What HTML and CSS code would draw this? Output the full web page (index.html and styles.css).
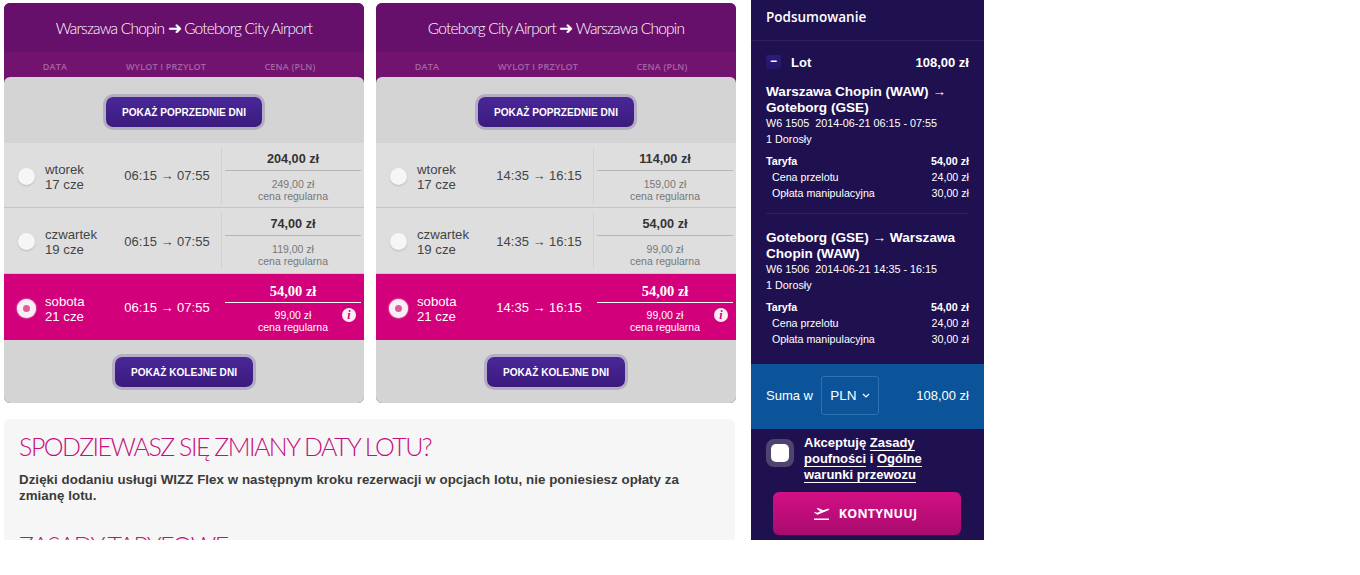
FILE: index.html
```html
<!DOCTYPE html>
<html lang="pl">
<head>
  <meta charset="UTF-8"/>
  <title>Wybór lotu</title>
  <link rel="stylesheet" href="styles.css">
</head>
<body>
  <div class="page">

    <!-- Flights -->
    <div class="main">
      <div class="flights">

        <div class="card">
          <div class="card-title">Warszawa Chopin <span class="bold-arrow">➜</span> Goteborg City Airport</div>
          <div class="card-cols"><span>DATA</span><span>WYLOT I PRZYLOT</span><span>CENA (PLN)</span></div>
          <div class="card-body">
            <div class="more more-top"><div class="more-btn">POKAŻ POPRZEDNIE DNI</div></div>
            <div class="day">
              <div class="radio"></div>
              <div class="date">wtorek<br>17 cze</div>
              <div class="time">06:15 → 07:55</div>
              <div class="price"><div class="price-now">204,00 zł</div><div class="price-old">249,00 zł<br>cena regularna</div></div>
            </div>
            <div class="day">
              <div class="radio"></div>
              <div class="date">czwartek<br>19 cze</div>
              <div class="time">06:15 → 07:55</div>
              <div class="price"><div class="price-now">74,00 zł</div><div class="price-old">119,00 zł<br>cena regularna</div></div>
            </div>
            <div class="day selected">
              <div class="radio"></div>
              <div class="date">sobota<br>21 cze</div>
              <div class="time">06:15 → 07:55</div>
              <div class="price"><div class="price-now">54,00 zł</div><div class="price-old">99,00 zł<br>cena regularna</div><span class="info">i</span></div>
            </div>
            <div class="more more-bottom"><div class="more-btn">POKAŻ KOLEJNE DNI</div></div>
          </div>
        </div>

        <div class="card">
          <div class="card-title">Goteborg City Airport <span class="bold-arrow">➜</span> Warszawa Chopin</div>
          <div class="card-cols"><span>DATA</span><span>WYLOT I PRZYLOT</span><span>CENA (PLN)</span></div>
          <div class="card-body">
            <div class="more more-top"><div class="more-btn">POKAŻ POPRZEDNIE DNI</div></div>
            <div class="day">
              <div class="radio"></div>
              <div class="date">wtorek<br>17 cze</div>
              <div class="time">14:35 → 16:15</div>
              <div class="price"><div class="price-now">114,00 zł</div><div class="price-old">159,00 zł<br>cena regularna</div></div>
            </div>
            <div class="day">
              <div class="radio"></div>
              <div class="date">czwartek<br>19 cze</div>
              <div class="time">14:35 → 16:15</div>
              <div class="price"><div class="price-now">54,00 zł</div><div class="price-old">99,00 zł<br>cena regularna</div></div>
            </div>
            <div class="day selected">
              <div class="radio"></div>
              <div class="date">sobota<br>21 cze</div>
              <div class="time">14:35 → 16:15</div>
              <div class="price"><div class="price-now">54,00 zł</div><div class="price-old">99,00 zł<br>cena regularna</div><span class="info">i</span></div>
            </div>
            <div class="more more-bottom"><div class="more-btn">POKAŻ KOLEJNE DNI</div></div>
          </div>
        </div>

      </div>

      <div class="notes">
        <h2>SPODZIEWASZ SIĘ ZMIANY DATY LOTU?</h2>
        <p>Dzięki dodaniu usługi WIZZ Flex w następnym kroku rezerwacji w opcjach lotu, nie poniesiesz opłaty za zmianę lotu.</p>
        <h2 class="notes-second">ZASADY TARYFOWE</h2>
      </div>
    </div>

    <!-- Summary -->
    <div class="summary">
      <div class="summary-title">Podsumowanie</div>
      <div class="summary-body">
        <div class="lot-row">
          <span class="toggle">−</span>
          <span class="lot-name">Lot</span>
          <span class="lot-total">108,00 zł</span>
        </div>

        <div class="leg">
          <div class="leg-route">Warszawa Chopin (WAW) → Goteborg (GSE)</div>
          <div class="leg-meta">W6 1505&nbsp; 2014-06-21 06:15 - 07:55</div>
          <div class="leg-pax">1 Dorosły</div>
          <div class="fare fare-head"><span>Taryfa</span><span>54,00 zł</span></div>
          <div class="fare"><span>Cena przelotu</span><span>24,00 zł</span></div>
          <div class="fare"><span>Opłata manipulacyjna</span><span>30,00 zł</span></div>
        </div>

        <div class="leg leg-last">
          <div class="leg-route">Goteborg (GSE) → Warszawa Chopin (WAW)</div>
          <div class="leg-meta">W6 1506&nbsp; 2014-06-21 14:35 - 16:15</div>
          <div class="leg-pax">1 Dorosły</div>
          <div class="fare fare-head"><span>Taryfa</span><span>54,00 zł</span></div>
          <div class="fare"><span>Cena przelotu</span><span>24,00 zł</span></div>
          <div class="fare"><span>Opłata manipulacyjna</span><span>30,00 zł</span></div>
        </div>
      </div>

      <div class="total">
        <span class="total-label">Suma w</span>
        <span class="currency">PLN
          <svg width="8" height="5" viewBox="0 0 8 5"><path d="M1 1l3 3 3-3" fill="none" stroke="#fff" stroke-width="1.2"/></svg>
        </span>
        <span class="total-value">108,00 zł</span>
      </div>

      <div class="accept">
        <div class="checkbox"><div class="checkbox-inner"></div></div>
        <div class="accept-text">
          <div>Akceptuję <a href="#">Zasady</a></div>
          <div><a href="#">poufności</a> i <a href="#">Ogólne</a></div>
          <div><a href="#">warunki przewozu</a></div>
        </div>
      </div>

      <div class="continue-wrap">
        <div class="continue-btn">
          <svg width="17" height="14" viewBox="0 0 17 14"><path d="M1 5.5l1.2-.6 2 .9 3-1.2L3.600 1.500l1.500-.5 5.200 2.200 3.500-1.300c1-.4 2.200-.3 2.400.2.200.5-.5 1.100-1.500 1.500L4.500 7.800z" fill="#fff"/><rect x="1" y="11.500" width="15" height="1.500" fill="#fff"/></svg>
          <span>KONTYNUUJ</span>
        </div>
      </div>
    </div>

  </div>
</body>
</html>
```

FILE: styles.css
```css
html, body {
  margin: 0;
  background: #fff;
}
body {
  font-family: "Liberation Sans", Arial, sans-serif;
  height: 575px;
  overflow: hidden;
}
.page {
  display: flex;
  align-items: flex-start;
  height: 540px;
  overflow: hidden;
  width: 984px;
}
.main {
  flex: none;
  width: 735px;
  padding-left: 4px;
  margin-right: 12px;
  height: 540px;
  overflow: hidden;
}
.flights {
  display: flex;
  gap: 12px;
  padding-top: 3px;
}
/* Flight cards */
.card {
  width: 360px;
  height: 400px;
  border-radius: 6px;
  overflow: hidden;
  display: flex;
  flex-direction: column;
  background: #72146f;
}
.card-title {
  height: 49px;
  line-height: 50px;
  background: #660f6b;
  color: #fff;
  text-align: center;
  font-family: Lato, sans-serif;
  font-weight: 300;
  font-size: 15.500px;
  letter-spacing: -0.8px;
}
.bold-arrow {
  font-family: "DejaVu Sans", sans-serif;
  font-size: 17px;
  line-height: 1;
}
.card-cols {
  height: 25px;
  display: grid;
  grid-template-columns: 102px 120px 128px;
  background: #72146f;
  color: #a564a5;
  font-family: "Open Sans", sans-serif;
  font-size: 9px;
  font-weight: 600;
  line-height: 29px;
  text-align: center;
  letter-spacing: .2px;
}
.card-body {
  flex: 1;
  background: #d4d4d4;
  border-radius: 6px 6px 0 0;
  display: flex;
  flex-direction: column;
}
.more {
  display: flex;
  justify-content: center;
  align-items: center;
}
.more-top {
  height: 62px;
  padding-top: 4px;
}
.more-bottom {
  height: 63px;
}
.more-btn {
  height: 30px;
  line-height: 31px;
  padding: 0 16px;
  border-radius: 7px;
  background: linear-gradient(#4a2799, #3a1b7c);
  box-shadow: 0 0 0 3px #b4adc4;
  color: #fff;
  font-size: 10.100px;
  font-weight: bold;
  white-space: nowrap;
}
.day {
  height: 65px;
  box-sizing: border-box;
  display: flex;
  align-items: center;
  background: #dedede;
  border-bottom: 1px solid #c4c4c4;
  color: #444;
}
.day + .day {
  height: 66px;
}
.radio {
  width: 17px;
  height: 17px;
  margin-left: 14px;
  margin-top: 2px;
  border-radius: 50%;
  background: #f6f6f6;
  box-shadow: 0 1px 2px #bbb;
  flex: none;
}
.date {
  width: 80px;
  margin-left: 10px;
  margin-top: 3px;
  font-size: 13.200px;
  line-height: 15px;
  flex: none;
}
.time {
  width: 96px;
  margin-top: 1px;
  font-size: 13px;
  text-align: center;
  flex: none;
  margin-left: -6px;
}
.price {
  width: 143px;
  margin-left: 6px;
  height: 57px;
  position: relative;
  border-left: 1px solid #d2d2d2;
  padding: 0 3px;
  text-align: center;
  flex: none;
  box-sizing: border-box;
}
.price-now {
  height: 23px;
  line-height: 24px;
  border-bottom: 1px solid #b5b5b5;
  font-size: 12.700px;
  font-weight: bold;
  color: #333;
}
.price-old {
  margin-top: 7px;
  font-size: 10.500px;
  line-height: 12px;
  color: #777;
}
.day.selected {
  background: #d2007a;
  color: #fff;
  border-bottom: 0;
}
.day.selected .radio {
  width: 7px;
  height: 7px;
  background: #d9609f;
  border: 6px solid #fbeef5;
  box-shadow: 0 0 2px #fbeef5;
  margin-left: 13px;
}
.day.selected .date {
  margin-left: 9px;
}
.day.selected .price {
  border-left-color: transparent;
  color: #fff;
}
.day.selected .price-now {
  font-family: "Liberation Serif", serif;
  font-size: 14.500px;
  color: #fff;
  border-bottom-color: #fff;
}
.day.selected .price-old {
  margin-top: 6px;
  color: #fff;
}
.info {
  position: absolute;
  right: 8px;
  top: 29px;
  width: 14px;
  height: 14px;
  border-radius: 50%;
  background: #fbeef5;
  color: #d2007a;
  font-family: "Liberation Serif", serif;
  font-style: italic;
  font-weight: bold;
  font-size: 12px;
  line-height: 14px;
  text-align: center;
}
/* Notes under the cards */
.notes {
  margin-top: 16px;
  height: 121px;
  overflow: hidden;
  background: #f6f6f6;
  border-radius: 6px 6px 0 0;
  padding: 0 15px;
  width: 701px;
}
.notes h2 {
  margin: 0;
  padding-top: 12px;
  font-family: Lato, sans-serif;
  font-weight: 300;
  font-size: 25px;
  line-height: 30px;
  letter-spacing: -1.5px;
  color: #c5107f;
}
.notes p {
  margin: 11px 0 0;
  max-width: 680px;
  font-size: 13.300px;
  font-weight: bold;
  line-height: 16px;
  letter-spacing: .06px;
  color: #3b3b3b;
}
.notes .notes-second {
  padding-top: 26px;
}
/* Summary */
.summary {
  width: 233px;
  height: 540px;
  background: #1f1150;
  color: #fff;
  flex: none;
  display: flex;
  flex-direction: column;
}
.summary-title {
  height: 41px;
  box-sizing: border-box;
  padding: 9px 15px 0;
  border-bottom: 1px solid #2e2160;
  font-family: "Open Sans", sans-serif;
  font-weight: 600;
  font-size: 13.500px;
  line-height: 17px;
}
.summary-body {
  height: 323px;
  padding: 0 15px;
  box-sizing: border-box;
}
.lot-row {
  display: flex;
  align-items: center;
  height: 40px;
  padding: 1px 0;
  font-weight: bold;
  font-size: 13px;
}
.toggle {
  width: 15px;
  height: 14px;
  line-height: 13px;
  background: linear-gradient(#2b1d78, #241566);
  border-radius: 2px;
  text-align: center;
  font-size: 12px;
}
.lot-name {
  margin-left: 10px;
  flex: 1;
}
.leg {
  padding-bottom: 12px;
  border-bottom: 1px solid #2e2160;
  margin-bottom: 16px;
}
.leg-last {
  border-bottom: 0;
  margin-bottom: 0;
}
.leg-route {
  font-size: 13.600px;
  font-weight: bold;
  line-height: 16px;
  margin-top: 1px;
}
.leg-meta {
  font-size: 10.800px;
  line-height: 14px;
}
.leg-pax {
  font-size: 10.800px;
  line-height: 14px;
  margin-top: 2px;
  margin-bottom: 7px;
}
.fare {
  display: flex;
  justify-content: space-between;
  font-size: 10.700px;
  line-height: 16px;
  padding-left: 6px;
}
.fare-head {
  font-weight: bold;
  padding-left: 0;
}
.total {
  height: 65px;
  box-sizing: border-box;
  background: #0b5499;
  display: flex;
  align-items: center;
  padding: 0 15px 2px;
  font-size: 13px;
}
.currency {
  width: 58px;
  height: 39px;
  box-sizing: border-box;
  margin-left: 8px;
  border: 1px solid #2f72b0;
  border-radius: 3px;
  display: flex;
  align-items: center;
  justify-content: center;
  gap: 5px;
  font-size: 13.500px;
}
.total-value {
  margin-left: auto;
}
.accept {
  display: flex;
  padding: 6px 15px 0;
  gap: 10px;
  height: 57px;
}
.checkbox {
  width: 28px;
  height: 28px;
  margin-top: 4px;
  border-radius: 8px;
  background: #4f4470;
  display: flex;
  align-items: center;
  justify-content: center;
  flex: none;
}
.checkbox-inner {
  width: 18px;
  height: 18px;
  border-radius: 5px;
  background: #fff;
}
.accept-text {
  font-size: 13px;
  font-weight: bold;
  line-height: 16px;
}
.accept-text a {
  color: #fff;
  text-decoration: none;
  border-bottom: 1px solid #fff;
}
.continue-wrap {
  padding: 0 23px 0 22px;
}
.continue-btn {
  height: 43px;
  box-sizing: border-box;
  padding-right: 4px;
  border-radius: 6px;
  background: linear-gradient(#d40f85, #a80b6d);
  display: flex;
  align-items: center;
  justify-content: center;
  gap: 9px;
  font-family: "Open Sans", sans-serif;
  font-weight: 700;
  font-size: 12.500px;
  letter-spacing: .2px;
}
```
